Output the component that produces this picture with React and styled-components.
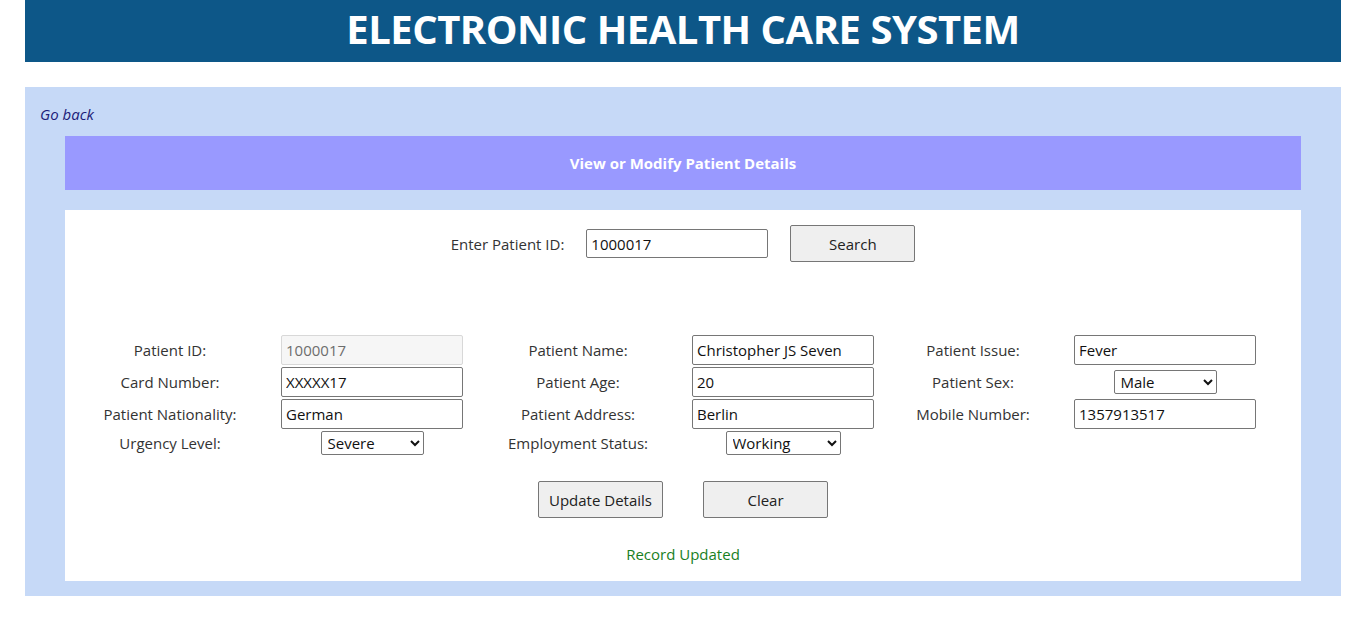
import React from "react";
import styled, { createGlobalStyle } from "styled-components";

const Global = createGlobalStyle`
  html, body { margin: 0; padding: 0; background: #fff; }
  body { font-family: "Open Sans", "Noto Sans", sans-serif; font-size: 15px; color: #222; }
  * { box-sizing: border-box; }
`;

const Page = styled.div`
  padding: 0 25px;
`;

const Header = styled.header`
  background: #0d5788;
  height: 62px;
  display: flex;
  align-items: center;
  justify-content: center;
`;

const Title = styled.h1`
  margin: 0;
  color: #fff;
  font-family: "Open Sans", sans-serif;
  font-weight: 700;
  font-size: 40px;
  letter-spacing: -0.5px;
  line-height: 1;
  padding-bottom: 4px;
`;

const Panel = styled.section`
  margin-top: 25px;
  background: #c6d9f7;
  padding: 14px 40px 15px;
`;

const BackLink = styled.a`
  display: block;
  margin-left: -25px;
  color: #1c1c7a;
  font-style: italic;
  font-size: 15px;
  line-height: 27px;
  text-decoration: none;
  cursor: pointer;
`;

const Banner = styled.div`
  margin-top: 8px;
  height: 54px;
  background: #9999ff;
  color: #fff;
  font-weight: 700;
  font-size: 15px;
  display: flex;
  align-items: center;
  justify-content: center;
`;

const Card = styled.div`
  margin-top: 20px;
  background: #fff;
  padding: 15px 0 17px;
`;

const SearchRow = styled.div`
  display: flex;
  align-items: center;
  justify-content: center;
  gap: 22px;
`;

const Label = styled.label`
  color: #333;
  font-size: 15px;
  white-space: nowrap;
`;

const TextInput = styled.input`
  width: 182px;
  height: ${(p) => p.$h || 30}px;
  border: 1px solid #767676;
  border-radius: 2px;
  padding: 0 4px;
  font-family: inherit;
  font-size: 15px;
  color: #111;
  background: ${(p) => (p.readOnly ? "#f6f6f6" : "#fff")};
  ${(p) => p.readOnly && "color: #6d6d6d; border-color: #d8d8d8;"}
`;

const Button = styled.button`
  width: 125px;
  height: 37px;
  border: 1px solid #767676;
  border-radius: 2px;
  background: #efefef;
  font-family: inherit;
  font-size: 15px;
  color: #222;
  cursor: pointer;
`;

const Grid = styled.div`
  margin-top: 73px;
  margin-left: 4px;
  display: grid;
  grid-template-columns: 202px 202px 210px 200px 180px 204px;
  row-gap: 2px;
  align-items: center;
  justify-items: center;
`;

const Select = styled.select`
  width: ${(p) => p.$w}px;
  height: 24px;
  border: 1px solid #767676;
  border-radius: 2px;
  background: #fff;
  font-family: inherit;
  font-size: 15px;
  color: #111;
  padding: 0 2px;
`;

const Actions = styled.div`
  margin-top: 26px;
  display: flex;
  justify-content: center;
  gap: 40px;
`;

const Status = styled.p`
  margin: 26px 0 0;
  text-align: center;
  color: #19801e;
  font-size: 15px;
`;

export default function App() {
  return (
    <Page>
      <Global />
      <Header>
        <Title>ELECTRONIC HEALTH CARE SYSTEM</Title>
      </Header>
      <Panel>
        <BackLink>Go back</BackLink>
        <Banner>View or Modify Patient Details</Banner>
        <Card>
          <SearchRow>
            <Label>Enter Patient ID:</Label>
            <TextInput $h={29} defaultValue="1000017" />
            <Button>Search</Button>
          </SearchRow>
          <Grid>
            <Label>Patient ID:</Label>
            <TextInput readOnly defaultValue="1000017" />
            <Label>Patient Name:</Label>
            <TextInput defaultValue="Christopher JS Seven" />
            <Label>Patient Issue:</Label>
            <TextInput defaultValue="Fever" />

            <Label>Card Number:</Label>
            <TextInput defaultValue="XXXXX17" />
            <Label>Patient Age:</Label>
            <TextInput defaultValue="20" />
            <Label>Patient Sex:</Label>
            <Select $w={103} defaultValue="Male">
              <option>Male</option>
              <option>Female</option>
            </Select>

            <Label>Patient Nationality:</Label>
            <TextInput defaultValue="German" />
            <Label>Patient Address:</Label>
            <TextInput defaultValue="Berlin" />
            <Label>Mobile Number:</Label>
            <TextInput defaultValue="1357913517" />

            <Label>Urgency Level:</Label>
            <Select $w={103} defaultValue="Severe">
              <option>Severe</option>
              <option>Moderate</option>
              <option>Low</option>
            </Select>
            <Label>Employment Status:</Label>
            <Select $w={115} defaultValue="Working">
              <option>Working</option>
              <option>Unemployed</option>
            </Select>
          </Grid>
          <Actions>
            <Button>Update Details</Button>
            <Button>Clear</Button>
          </Actions>
          <Status>Record Updated</Status>
        </Card>
      </Panel>
    </Page>
  );
}
